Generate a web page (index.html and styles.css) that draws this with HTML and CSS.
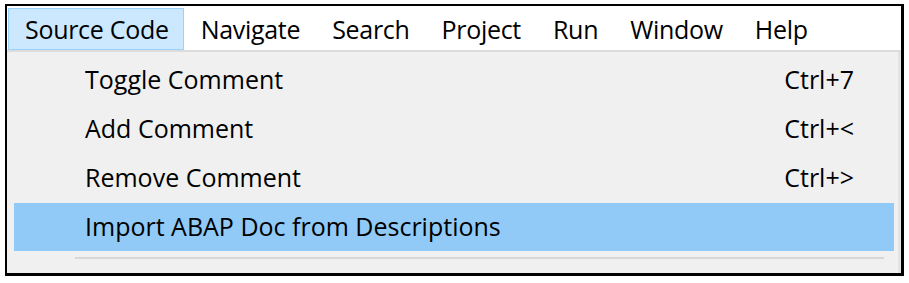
FILE: index.html
```html
<!DOCTYPE html>
<html>
<head>
<meta charset="utf-8">
<link rel="stylesheet" href="styles.css">
</head>
<body>
<div class="frame">
  <div class="menubar">
    <span class="menu-item active">Source Code</span>
    <span class="menu-item">Navigate</span>
    <span class="menu-item">Search</span>
    <span class="menu-item">Project</span>
    <span class="menu-item">Run</span>
    <span class="menu-item">Window</span>
    <span class="menu-item">Help</span>
  </div>
  <div class="dropdown">
    <div class="row"><span class="label">Toggle Comment</span><span class="accel">Ctrl+7</span></div>
    <div class="row"><span class="label">Add Comment</span><span class="accel">Ctrl+&lt;</span></div>
    <div class="row"><span class="label">Remove Comment</span><span class="accel">Ctrl+&gt;</span></div>
    <div class="row selected"><span class="label">Import ABAP Doc from Descriptions</span><span class="accel"></span></div>
    <div class="separator"></div>
  </div>
</div>
</body>
</html>
```

FILE: styles.css
```css
html, body {
  margin: 0;
  padding: 0;
  background: #ffffff;
}

body {
  font-family: "Open Sans", "Noto Sans", sans-serif;
  font-size: 25px;
  color: #000;
}

.frame {
  box-sizing: border-box;
  margin: 4px 0 0 5px;
  width: 899px;
  height: 272px;
  border: 2px solid #000;
  border-right-width: 3px;
  border-bottom-width: 3px;
  display: flex;
  flex-direction: column;
  background: #f0f0f0;
}

.menubar {
  box-sizing: border-box;
  height: 46px;
  padding: 2px 0 0 1px;
  background: #fff;
  border-bottom: 2px solid #dcdcdc;
  display: flex;
  align-items: stretch;
  letter-spacing: -0.3px;
}

.menu-item {
  box-sizing: border-box;
  height: 42px;
  padding: 0 14px 1px 16px;
  border: 1px solid transparent;
  display: flex;
  align-items: center;
  white-space: nowrap;
}

.menu-item.active {
  background: #cce8ff;
  border-color: #99d1ff;
}

.dropdown {
  flex: 1;
  padding: 4px 4px 0 7px;
  border-right: 3px solid #e3e3e3;
  display: flex;
  flex-direction: column;
}

.row {
  height: 48px;
  margin-bottom: 1px;
  display: flex;
  align-items: center;
  padding: 0 40px 2px 71px;
  box-sizing: border-box;
}

.row .label {
  flex: 1;
}

.row .accel {
  text-align: right;
}

.row.selected {
  background: #91c9f7;
}

.separator {
  height: 2px;
  background: #d7d7d7;
  margin: 5px 10px 0 61px;
}
```
